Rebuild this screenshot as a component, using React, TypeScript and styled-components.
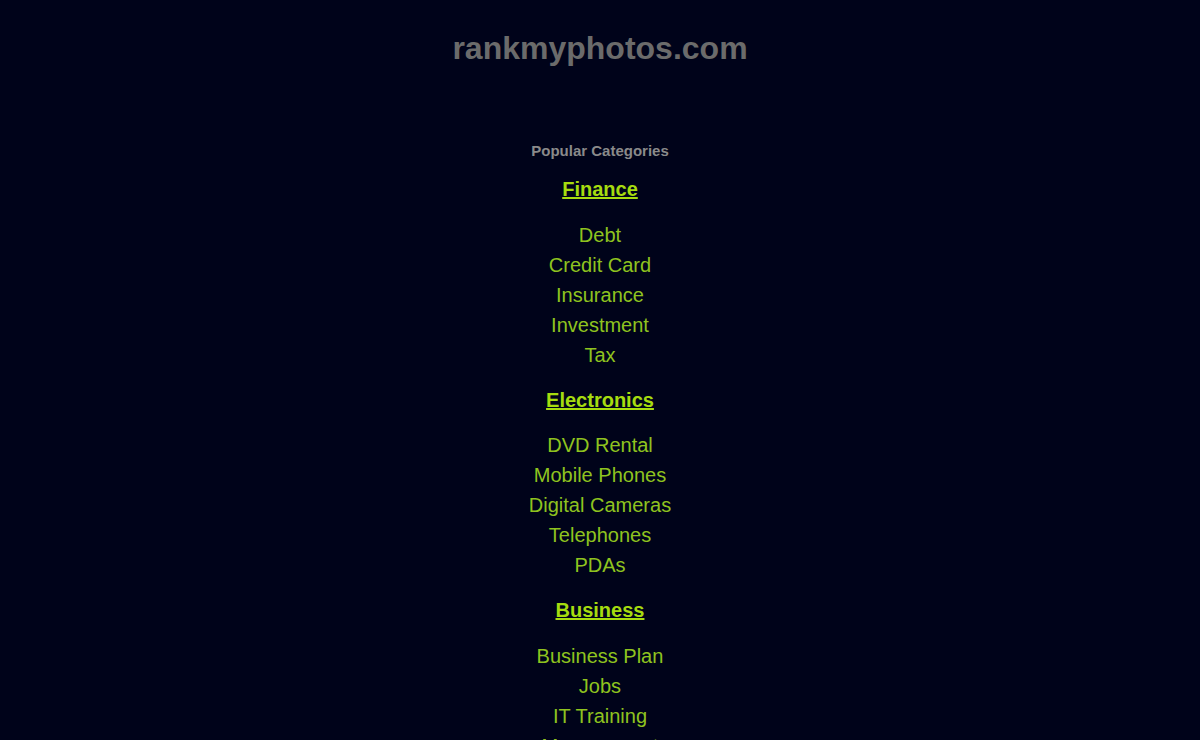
import React, { ReactElement } from "react";
import styled, { createGlobalStyle } from "styled-components";

interface Category {
  name: string;
  items: string[];
}

const categories: Category[] = [
  {
    name: "Finance",
    items: ["Debt", "Credit Card", "Insurance", "Investment", "Tax"],
  },
  {
    name: "Electronics",
    items: [
      "DVD Rental",
      "Mobile Phones",
      "Digital Cameras",
      "Telephones",
      "PDAs",
    ],
  },
  {
    name: "Business",
    items: ["Business Plan", "Jobs", "IT Training", "Management", "Marketing"],
  },
];

const GlobalStyle = createGlobalStyle`
  html, body {
    margin: 0;
    padding: 0;
    background: #00031a;
  }
  body {
    font-family: "Liberation Sans", Arial, sans-serif;
  }
`;

const Page = styled.div`
  min-height: 740px;
  display: flex;
  flex-direction: column;
  align-items: center;
  background: #00031a;
  text-align: center;
`;

const SiteTitle = styled.h1`
  margin: 28px 0 0;
  font-size: 32px;
  line-height: 40px;
  font-weight: bold;
  color: #6b6b6b;
`;

const Categories = styled.div`
  margin-top: 74px;
  display: flex;
  flex-direction: column;
  align-items: center;
`;

const SectionLabel = styled.div`
  font-size: 15px;
  line-height: 18px;
  font-weight: bold;
  color: #8a8a8a;
  margin-bottom: 14px;
`;

const CategoryHeading = styled.a`
  display: block;
  font-size: 20px;
  line-height: 30px;
  font-weight: bold;
  color: #a6dc0f;
  text-decoration: underline;
  margin-bottom: 15.5px;
  cursor: pointer;
`;

const ItemList = styled.ul`
  list-style: none;
  margin: 0 0 15px;
  padding: 0;
`;

const Item = styled.li`
  font-size: 20px;
  line-height: 30px;
  color: #8fc31f;
`;

const App: React.FC = (): ReactElement => {
  return (
    <>
      <GlobalStyle />
      <Page>
        <SiteTitle>rankmyphotos.com</SiteTitle>
        <Categories>
          <SectionLabel>Popular Categories</SectionLabel>
          {categories.map((cat) => (
            <React.Fragment key={cat.name}>
              <CategoryHeading>{cat.name}</CategoryHeading>
              <ItemList>
                {cat.items.map((item) => (
                  <Item key={item}>{item}</Item>
                ))}
              </ItemList>
            </React.Fragment>
          ))}
        </Categories>
      </Page>
    </>
  );
};

export default App;
